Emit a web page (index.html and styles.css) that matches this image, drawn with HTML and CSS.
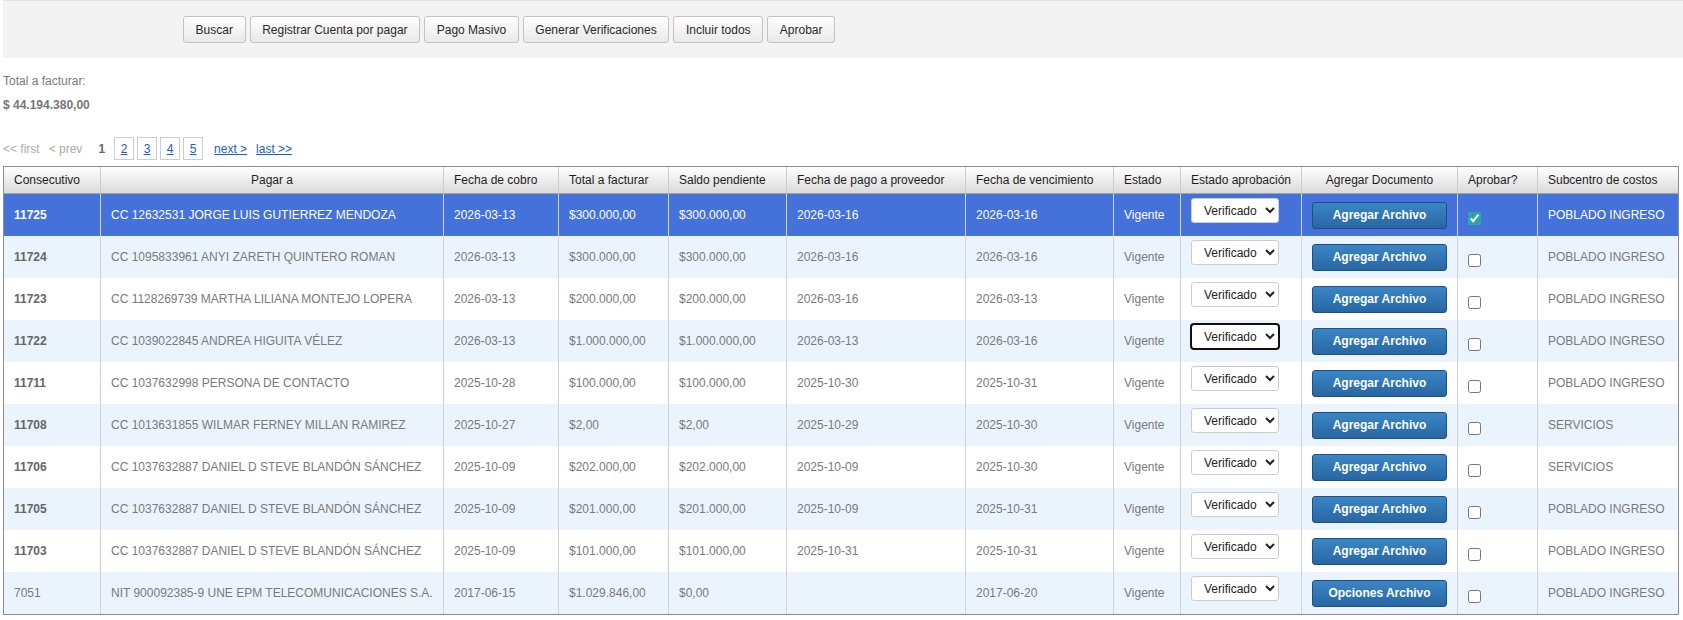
FILE: index.html
```html
<!DOCTYPE html>
<html lang="es">
<head>
<meta charset="utf-8">
<title>Cuentas por pagar</title>
<link rel="stylesheet" href="styles.css">
</head>
<body>
<div class="page">
  <div class="toolbar">
    <button class="tb-btn" type="button">Buscar</button>
    <button class="tb-btn" type="button">Registrar Cuenta por pagar</button>
    <button class="tb-btn" type="button">Pago Masivo</button>
    <button class="tb-btn" type="button">Generar Verificaciones</button>
    <button class="tb-btn" type="button">Incluir todos</button>
    <button class="tb-btn" type="button">Aprobar</button>
  </div>

  <div class="total-label">Total a facturar:</div>
  <div class="total-amount">$ 44.194.380,00</div>

  <div class="pager">
    <span class="pg-off pg-first">&lt;&lt; first</span>
    <span class="pg-off pg-prev">&lt; prev</span>
    <span class="pg-current">1</span>
    <span class="pg-box"><a href="#">2</a></span>
    <span class="pg-box"><a href="#">3</a></span>
    <span class="pg-box"><a href="#">4</a></span>
    <span class="pg-box"><a href="#">5</a></span>
    <a class="pg-link pg-next" href="#">next &gt;</a>
    <a class="pg-link pg-last" href="#">last &gt;&gt;</a>
  </div>

  <table class="grid">
    <colgroup>
      <col class="w-cons"><col class="w-pagar"><col class="w-fcobro"><col class="w-total"><col class="w-saldo"><col class="w-fpago"><col class="w-fvenc"><col class="w-estado"><col class="w-aprob"><col class="w-doc"><col class="w-chk"><col class="w-sub">
    </colgroup>
    <thead>
      <tr>
        <th>Consecutivo</th>
        <th class="center">Pagar a</th>
        <th>Fecha de cobro</th>
        <th>Total a facturar</th>
        <th>Saldo pendiente</th>
        <th>Fecha de pago a proveedor</th>
        <th>Fecha de vencimiento</th>
        <th>Estado</th>
        <th class="center">Estado aprobación</th>
        <th class="center">Agregar Documento</th>
        <th>Aprobar?</th>
        <th>Subcentro de costos</th>
      </tr>
    </thead>
    <tbody>
      <tr class="selected">
        <td class="id">11725</td><td>CC 12632531 JORGE LUIS GUTIERREZ MENDOZA</td><td>2026-03-13</td><td>$300.000,00</td><td>$300.000,00</td><td>2026-03-16</td><td>2026-03-16</td><td>Vigente</td>
        <td><select class="sel"><option>Verificado</option></select></td>
        <td><button class="file-btn" type="button">Agregar Archivo</button></td>
        <td><input class="chk" type="checkbox" checked></td>
        <td>POBLADO INGRESO</td>
      </tr>
      <tr class="alt">
        <td class="id">11724</td><td>CC 1095833961 ANYI ZARETH QUINTERO ROMAN</td><td>2026-03-13</td><td>$300.000,00</td><td>$300.000,00</td><td>2026-03-16</td><td>2026-03-16</td><td>Vigente</td>
        <td><select class="sel"><option>Verificado</option></select></td>
        <td><button class="file-btn" type="button">Agregar Archivo</button></td>
        <td><input class="chk" type="checkbox"></td>
        <td>POBLADO INGRESO</td>
      </tr>
      <tr>
        <td class="id">11723</td><td>CC 1128269739 MARTHA LILIANA MONTEJO LOPERA</td><td>2026-03-13</td><td>$200.000,00</td><td>$200.000,00</td><td>2026-03-16</td><td>2026-03-13</td><td>Vigente</td>
        <td><select class="sel"><option>Verificado</option></select></td>
        <td><button class="file-btn" type="button">Agregar Archivo</button></td>
        <td><input class="chk" type="checkbox"></td>
        <td>POBLADO INGRESO</td>
      </tr>
      <tr class="alt">
        <td class="id">11722</td><td>CC 1039022845 ANDREA HIGUITA VÉLEZ</td><td>2026-03-13</td><td>$1.000.000,00</td><td>$1.000.000,00</td><td>2026-03-13</td><td>2026-03-16</td><td>Vigente</td>
        <td><select class="sel focused"><option>Verificado</option></select></td>
        <td><button class="file-btn" type="button">Agregar Archivo</button></td>
        <td><input class="chk" type="checkbox"></td>
        <td>POBLADO INGRESO</td>
      </tr>
      <tr>
        <td class="id">11711</td><td>CC 1037632998 PERSONA DE CONTACTO</td><td>2025-10-28</td><td>$100.000,00</td><td>$100.000,00</td><td>2025-10-30</td><td>2025-10-31</td><td>Vigente</td>
        <td><select class="sel"><option>Verificado</option></select></td>
        <td><button class="file-btn" type="button">Agregar Archivo</button></td>
        <td><input class="chk" type="checkbox"></td>
        <td>POBLADO INGRESO</td>
      </tr>
      <tr class="alt">
        <td class="id">11708</td><td>CC 1013631855 WILMAR FERNEY MILLAN RAMIREZ</td><td>2025-10-27</td><td>$2,00</td><td>$2,00</td><td>2025-10-29</td><td>2025-10-30</td><td>Vigente</td>
        <td><select class="sel"><option>Verificado</option></select></td>
        <td><button class="file-btn" type="button">Agregar Archivo</button></td>
        <td><input class="chk" type="checkbox"></td>
        <td>SERVICIOS</td>
      </tr>
      <tr>
        <td class="id">11706</td><td>CC 1037632887 DANIEL D STEVE BLANDÓN SÁNCHEZ</td><td>2025-10-09</td><td>$202.000,00</td><td>$202.000,00</td><td>2025-10-09</td><td>2025-10-30</td><td>Vigente</td>
        <td><select class="sel"><option>Verificado</option></select></td>
        <td><button class="file-btn" type="button">Agregar Archivo</button></td>
        <td><input class="chk" type="checkbox"></td>
        <td>SERVICIOS</td>
      </tr>
      <tr class="alt">
        <td class="id">11705</td><td>CC 1037632887 DANIEL D STEVE BLANDÓN SÁNCHEZ</td><td>2025-10-09</td><td>$201.000,00</td><td>$201.000,00</td><td>2025-10-09</td><td>2025-10-31</td><td>Vigente</td>
        <td><select class="sel"><option>Verificado</option></select></td>
        <td><button class="file-btn" type="button">Agregar Archivo</button></td>
        <td><input class="chk" type="checkbox"></td>
        <td>POBLADO INGRESO</td>
      </tr>
      <tr>
        <td class="id">11703</td><td>CC 1037632887 DANIEL D STEVE BLANDÓN SÁNCHEZ</td><td>2025-10-09</td><td>$101.000,00</td><td>$101.000,00</td><td>2025-10-31</td><td>2025-10-31</td><td>Vigente</td>
        <td><select class="sel"><option>Verificado</option></select></td>
        <td><button class="file-btn" type="button">Agregar Archivo</button></td>
        <td><input class="chk" type="checkbox"></td>
        <td>POBLADO INGRESO</td>
      </tr>
      <tr class="alt">
        <td>7051</td><td>NIT 900092385-9 UNE EPM TELECOMUNICACIONES S.A.</td><td>2017-06-15</td><td>$1.029.846,00</td><td>$0,00</td><td></td><td>2017-06-20</td><td>Vigente</td>
        <td><select class="sel"><option>Verificado</option></select></td>
        <td><button class="file-btn" type="button">Opciones Archivo</button></td>
        <td><input class="chk" type="checkbox"></td>
        <td>POBLADO INGRESO</td>
      </tr>
    </tbody>
  </table>
</div>
</body>
</html>
```

FILE: styles.css
```css
html, body {
  margin: 0;
  padding: 0;
  background: #ffffff;
}

body {
  font-family: "Liberation Sans", Arial, sans-serif;
  font-size: 12px;
  color: #777777;
}

.page {
  padding-left: 3px;
}

/* Toolbar */
.toolbar {
  display: flex;
  gap: 4px;
  box-sizing: border-box;
  height: 58px;
  padding: 15px 0 0 180px;
  background: #f3f3f3;
  border-top: 1px solid #e4e4e4;
}

.tb-btn {
  height: 27px;
  padding: 0 11.6px;
  font-family: "Liberation Sans", Arial, sans-serif;
  font-size: 12px;
  color: #2a2a2a;
  background: linear-gradient(#fefefe, #e9e9e9);
  border: 1px solid #c3c3c3;
  border-radius: 3px;
  cursor: pointer;
}

/* Totals */
.total-label {
  margin-top: 16px;
  line-height: 14px;
  color: #7a7a7a;
}

.total-amount {
  margin-top: 10px;
  line-height: 14px;
  font-weight: bold;
  color: #777777;
}

/* Pager */
.pager {
  display: flex;
  align-items: center;
  margin-top: 25px;
  height: 23px;
  line-height: 14px;
}

.pg-off {
  color: #ababab;
}

.pg-first {
  margin-right: 9px;
}

.pg-prev {
  margin-right: 16px;
}

.pg-current {
  font-weight: bold;
  color: #666666;
  margin-right: 9px;
}

.pg-box {
  display: flex;
  align-items: center;
  justify-content: center;
  width: 20px;
  height: 23px;
  box-sizing: border-box;
  border: 1px solid #cccccc;
  margin-right: 3px;
}

.pg-box a,
.pg-link {
  color: #1560c6;
  text-decoration: underline;
}

.pg-next {
  margin-left: 8px;
  margin-right: 9px;
}

/* Grid */
.grid {
  margin-top: 6px;
  width: 1676px;
  table-layout: fixed;
  border-collapse: separate;
  border-spacing: 0;
  border: 1px solid #8d8d8d;
}

.w-cons { width: 96px; }
.w-pagar { width: 343px; }
.w-fcobro { width: 115px; }
.w-total { width: 110px; }
.w-saldo { width: 118px; }
.w-fpago { width: 179px; }
.w-fvenc { width: 148px; }
.w-estado { width: 67px; }
.w-aprob { width: 121px; }
.w-doc { width: 156px; }
.w-chk { width: 80px; }
.w-sub { width: 141px; }

.grid th {
  height: 26px;
  padding: 0 0 0 10px;
  text-align: left;
  font-weight: normal;
  color: #1e1e1e;
  white-space: nowrap;
  background: linear-gradient(#ffffff, #dadada);
  border-left: 1px solid #cdcdcd;
  border-bottom: 1px solid #a3a3a3;
}

.grid th.center {
  text-align: center;
  padding: 0;
}

.grid th:first-child,
.grid td:first-child {
  border-left: none;
}

.grid td {
  height: 42px;
  padding: 0 0 0 10px;
  white-space: nowrap;
  overflow: hidden;
  vertical-align: middle;
  color: #7a7a7a;
  border-left: 1px solid #d2d2d2;
}

.grid td.id {
  font-weight: bold;
  color: #666666;
}

.grid tr.alt td {
  background: #ebf4fd;
}

.grid tr.selected td {
  background: #4471da;
  color: #ffffff;
}

.sel {
  width: 88px;
  height: 25px;
  margin: 0 0 9px 0;
  padding: 0 0 0 8px;
  font-family: "Liberation Sans", Arial, sans-serif;
  font-size: 12px;
  color: #222222;
  background: #ffffff;
  border: 1px solid #cccccc;
  border-radius: 3px;
  vertical-align: middle;
}

.sel.focused {
  outline: 2px solid #111111;
  outline-offset: -1px;
}

.file-btn {
  width: 135px;
  height: 27px;
  padding: 0;
  font-family: "Liberation Sans", Arial, sans-serif;
  font-size: 12px;
  font-weight: bold;
  color: #ffffff;
  background: linear-gradient(#3b86c6, #2866a3);
  border: 1px solid #1e4f82;
  border-radius: 3px;
  vertical-align: middle;
  cursor: pointer;
}

.chk {
  width: 13px;
  height: 13px;
  margin: 6px 0 0 0;
  accent-color: #2ba3ad;
  vertical-align: middle;
}
```
